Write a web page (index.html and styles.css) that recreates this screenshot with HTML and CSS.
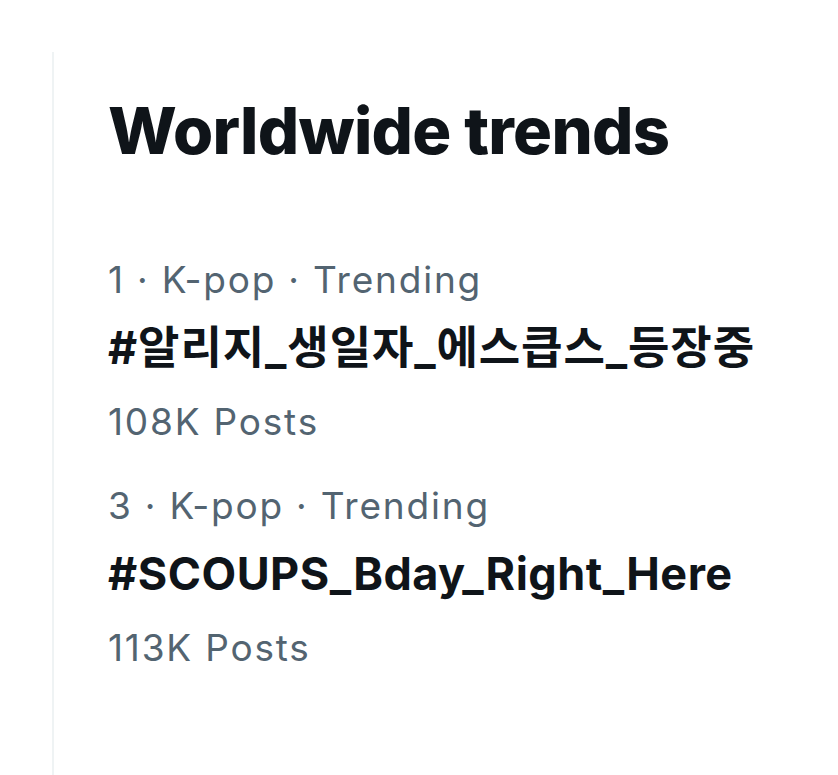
FILE: index.html
```html
<!DOCTYPE html>
<html lang="en">
<head>
<meta charset="utf-8">
<title>Worldwide trends</title>
<link rel="stylesheet" href="styles.css">
</head>
<body>
<main class="panel">
  <h1 class="title">Worldwide trends</h1>
  <section class="trends">
    <div class="trend">
      <div class="meta">1 · K-pop · Trending</div>
      <div class="tag tag-ko">#알리지_생일자_에스큽스_등장중</div>
      <div class="posts">108K Posts</div>
    </div>
    <div class="trend">
      <div class="meta">3 · K-pop · Trending</div>
      <div class="tag">#SCOUPS_Bday_Right_Here</div>
      <div class="posts">113K Posts</div>
    </div>
  </section>
</main>
</body>
</html>
```

FILE: styles.css
```css
html, body {
  margin: 0;
  padding: 0;
  background: #ffffff;
}
body {
  font-family: Inter, "Noto Sans CJK KR", sans-serif;
  color: #0f1419;
}
.panel {
  margin: 52px 0 0 52px;
  min-height: 723px;
  box-sizing: border-box;
  border-left: 2px solid #eff3f4;
  padding: 40px 0 0 54px;
}
.title {
  margin: 0;
  font-size: 65px;
  line-height: 78px;
  font-weight: 800;
  letter-spacing: -0.7px;
  color: #0f1419;
}
.trends {
  margin-top: 76px;
  display: flex;
  flex-direction: column;
  gap: 16px;
}
.trend {
  display: flex;
  flex-direction: column;
}
.meta, .posts {
  font-size: 37px;
  line-height: 68px;
  color: #536471;
  font-weight: 400;
  letter-spacing: 1.8px;
}
.tag {
  font-size: 45px;
  line-height: 68px;
  font-weight: 700;
  letter-spacing: 0.5px;
  color: #0f1419;
}
.tag-ko {
  letter-spacing: 0.9px;
}
.posts {
  margin-top: 6px;
}
```
